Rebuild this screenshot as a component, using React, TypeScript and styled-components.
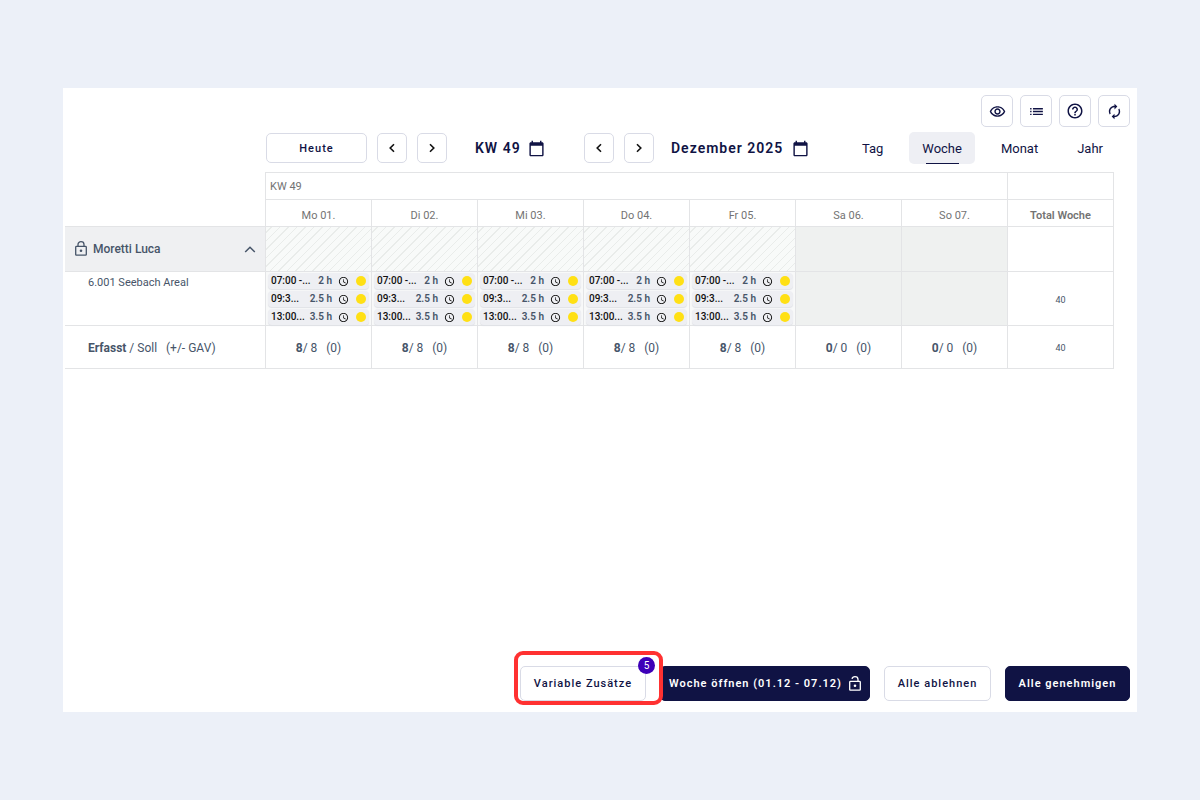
import React from 'react';
import styled, { createGlobalStyle, css } from 'styled-components';
import {
  MdAccessTime,
  MdAutorenew,
  MdCalendarToday,
  MdHelpOutline,
  MdList,
  MdOutlineRemoveRedEye,
} from 'react-icons/md';

const navy = '#101344';
const line = '#e3e4e6';

const GlobalStyle = createGlobalStyle`
  * { box-sizing: border-box; }
  body {
    margin: 0;
    background: #ecf0f8;
    font-family: Roboto, "Liberation Sans", sans-serif;
    color: ${navy};
  }
  button { font-family: inherit; color: inherit; cursor: pointer; }
`;

const Page = styled.div`
  min-height: 100vh;
  padding: 88px 63px;
  display: flex;
`;

const Card = styled.main`
  flex: 1;
  min-width: 0;
  background: #fff;
  display: flex;
  flex-direction: column;
`;

const IconBar = styled.div`
  display: flex;
  justify-content: flex-end;
  gap: 7px;
  padding: 7px 7px 0;
`;

const outlined = css`
  display: inline-flex;
  align-items: center;
  justify-content: center;
  padding: 0;
  background: #fff;
  border: 1px solid #d9dbe6;
  border-radius: 5px;
`;

const IconButton = styled.button`
  ${outlined}
  width: 32px;
  height: 32px;
`;

const Toolbar = styled.div`
  display: flex;
  align-items: center;
  height: 32px;
  margin: 5px 21px 8px 203px;
`;

const TodayButton = styled.button`
  ${outlined}
  width: 101px;
  height: 30px;
  font-size: 11px;
  font-weight: 500;
  letter-spacing: 1px;
`;

const Stepper = styled.div`
  display: flex;
  gap: 10px;
`;

const StepButton = styled.button`
  ${outlined}
  width: 30px;
  height: 30px;
  color: #111;
`;

const DateButton = styled.button<{ $width: number }>`
  display: flex;
  align-items: center;
  justify-content: space-between;
  width: ${(p) => p.$width}px;
  padding: 0;
  border: 0;
  background: none;
  font-size: 14px;
  font-weight: 600;
  letter-spacing: 1px;
  white-space: nowrap;
`;

const WeekGroup = styled.div`
  display: flex;
  align-items: center;
  gap: 28px;
  margin-left: 10px;
`;

const MonthGroup = styled.div`
  display: flex;
  align-items: center;
  gap: 17px;
  margin-left: 39px;
`;

const Tabs = styled.div`
  display: flex;
  gap: 13px;
  margin-left: auto;
`;

const Tab = styled.button<{ $active?: boolean }>`
  display: flex;
  align-items: center;
  justify-content: center;
  position: relative;
  height: 32px;
  padding: 0 13px;
  border: 0;
  border-radius: 5px;
  background: ${(p) => (p.$active ? '#eeeff4' : 'none')};
  font-size: 13px;
  ${(p) =>
    p.$active &&
    css`
      &::after {
        content: '';
        position: absolute;
        bottom: 0;
        left: 25%;
        right: 25%;
        height: 1px;
        background: ${navy};
      }
    `}
`;

const TableWrap = styled.div`
  padding: 0 23px 0 2px;
`;

const Plan = styled.table`
  table-layout: fixed;
  width: 100%;
  border-collapse: separate;
  border-spacing: 0;
  font-size: 12px;
  color: #475569;
`;

const NameCol = styled.col`
  width: 201px;
`;

const Blank = styled.td`
  padding: 0;
  border-right: 1px solid ${line};
  border-bottom: 1px solid ${line};
`;

const HeadCell = styled.th<{ $top?: boolean; $left?: boolean; $bold?: boolean }>`
  height: ${(p) => (p.$top ? 28 : 27)}px;
  padding: ${(p) => (p.$left ? '0 4px' : '4px 0 0')};
  text-align: ${(p) => (p.$left ? 'left' : 'center')};
  font-size: 11px;
  font-weight: ${(p) => (p.$bold ? 600 : 400)};
  color: #737373;
  border-right: 1px solid ${line};
  border-bottom: 1px solid ${line};
  border-top: ${(p) => (p.$top ? `1px solid ${line}` : '0')};
`;

const NameCell = styled.th`
  height: 45px;
  padding: 0 9px 0 10px;
  background: #eff0f2;
  border-right: 1px solid ${line};
  border-bottom: 1px solid ${line};
`;

const Person = styled.button`
  display: flex;
  align-items: center;
  gap: 6px;
  width: 100%;
  padding: 0;
  border: 0;
  background: none;
  font-size: 12px;
  font-weight: 500;

  svg:last-child { margin-left: auto; }
`;

const Cell = styled.td<{ $fill?: 'hatch' | 'off' | 'work' }>`
  padding: 0;
  text-align: center;
  vertical-align: middle;
  border-right: 1px solid ${line};
  border-bottom: 1px solid ${line};
  ${(p) => p.$fill === 'off' && 'background: #eff1f0;'}
  ${(p) => p.$fill === 'work' && 'background: #f8f9f9; vertical-align: top;'}
  ${(p) =>
    p.$fill === 'hatch' &&
    'background: repeating-linear-gradient(-45deg, #f8faf9 0 5px, #e9ecea 5px 6px);'}
`;

const SiteCell = styled.th`
  height: 54px;
  padding: 4px 0 0 23px;
  text-align: left;
  vertical-align: top;
  font-size: 11px;
  font-weight: 400;
  line-height: 14px;
  border-right: 1px solid ${line};
  border-bottom: 1px solid ${line};
`;

const SumCell = styled.th`
  height: 43px;
  padding: 2px 0 0 23px;
  text-align: left;
  font-size: 12px;
  font-weight: 400;
  white-space: pre;
  border-right: 1px solid ${line};
  border-bottom: 1px solid ${line};
`;

const Sum = styled.span`
  display: block;
  padding-top: 2px;
  white-space: pre;
  font-size: 12px;
`;

const Total = styled.span`
  font-size: 9px;
`;

const Shifts = styled.ul`
  list-style: none;
  margin: 0;
  padding: 1px 2px 0;
  display: grid;
  gap: 2px;
`;

const Shift = styled.li`
  display: flex;
  align-items: center;
  height: 16px;
  padding: 0 3px;
  border-radius: 4px;
  background: #eeeff3;
  box-shadow: 0 1px 1px #dfe1e6;
  font-size: 10px;
  font-weight: 500;
  line-height: 16px;
  white-space: nowrap;
  color: #111;
`;

const Hours = styled.span`
  margin-left: auto;
  margin-right: 6px;
  font-weight: 600;
  color: #475569;
`;

const Dot = styled.span`
  width: 10px;
  height: 10px;
  margin-left: 7px;
  border-radius: 50%;
  background: #ffe014;
`;

const Footer = styled.footer`
  display: flex;
  justify-content: flex-end;
  gap: 14px;
  margin-top: auto;
  padding: 24px 7px 11px;
`;

const Action = styled.button<{ $solid?: boolean; $width: number }>`
  display: inline-flex;
  align-items: center;
  justify-content: center;
  gap: 7px;
  min-width: ${(p) => p.$width}px;
  height: 35px;
  padding: 0 8px;
  border: 1px solid ${(p) => (p.$solid ? navy : '#d9dbe6')};
  border-radius: 5px;
  background: ${(p) => (p.$solid ? navy : '#fff')};
  color: ${(p) => (p.$solid ? '#fff' : navy)};
  font-size: 11px;
  font-weight: ${(p) => (p.$solid ? 600 : 500)};
  letter-spacing: 1px;
  white-space: nowrap;
`;

const Highlighted = styled.div`
  position: relative;
  display: flex;

  &::after {
    content: '';
    position: absolute;
    z-index: 1;
    inset: -15px -17px -4px -6px;
    border: 4px solid #ff3131;
    border-radius: 9px;
    pointer-events: none;
  }
`;

const Badge = styled.span`
  position: absolute;
  top: -9px;
  right: -9px;
  width: 17px;
  height: 17px;
  border-radius: 50%;
  background: #3d00b8;
  color: #fff;
  font-size: 10px;
  line-height: 17px;
  text-align: center;
`;

const Lock = ({ open }: { open?: boolean }) => (
  <svg width="12" height="16" viewBox="0 0 12 16" fill="none" stroke="currentColor" strokeWidth="1.3" aria-hidden>
    <rect x="0.7" y="5.4" width="10.6" height="8.8" rx="0.8" />
    <path d={open ? 'M3 2.8C3.3 1.5 4.4 0.7 6 0.7S9 1.8 9 3.5V5.4' : 'M3 5.4V3.5C3 1.8 4.3 0.7 6 0.7S9 1.8 9 3.5V5.4'} />
    <circle cx="6" cy="9.8" r="1.3" fill="currentColor" stroke="none" />
  </svg>
);

const Chevron = ({ dir }: { dir: 'left' | 'right' }) => (
  <svg width="6" height="10" viewBox="0 0 6 10" fill="none" stroke="currentColor" strokeWidth="1.6" aria-hidden>
    <path d={dir === 'left' ? 'M5 1.2L1.2 5L5 8.8' : 'M1 1.2L4.8 5L1 8.8'} />
  </svg>
);

const ChevronUp = () => (
  <svg width="12" height="8" viewBox="0 0 12 8" fill="none" stroke="currentColor" strokeWidth="1.5" aria-hidden>
    <path d="M1.2 7L6 2.2L10.8 7" />
  </svg>
);

const days = ['Mo 01.', 'Di 02.', 'Mi 03.', 'Do 04.', 'Fr 05.', 'Sa 06.', 'So 07.'];
const shifts = [
  { time: '07:00 -...', hours: '2 h' },
  { time: '09:3...', hours: '2.5 h' },
  { time: '13:00...', hours: '3.5 h' },
];
const isWorkday = (i: number) => i < 5;

export default function App() {
  return (
    <>
      <GlobalStyle />
      <Page>
        <Card>
          <IconBar>
            <IconButton aria-label="Ansicht"><MdOutlineRemoveRedEye size={17} /></IconButton>
            <IconButton aria-label="Liste"><MdList size={17} /></IconButton>
            <IconButton aria-label="Hilfe"><MdHelpOutline size={18} /></IconButton>
            <IconButton aria-label="Aktualisieren"><MdAutorenew size={17} /></IconButton>
          </IconBar>

          <Toolbar>
            <TodayButton>Heute</TodayButton>
            <WeekGroup>
              <Stepper>
                <StepButton aria-label="Vorherige Woche"><Chevron dir="left" /></StepButton>
                <StepButton aria-label="Nächste Woche"><Chevron dir="right" /></StepButton>
              </Stepper>
              <DateButton $width={70}>KW 49<MdCalendarToday size={17} /></DateButton>
            </WeekGroup>
            <MonthGroup>
              <Stepper>
                <StepButton aria-label="Vorheriger Monat"><Chevron dir="left" /></StepButton>
                <StepButton aria-label="Nächster Monat"><Chevron dir="right" /></StepButton>
              </Stepper>
              <DateButton $width={138}>Dezember 2025<MdCalendarToday size={17} /></DateButton>
            </MonthGroup>
            <Tabs>
              <Tab>Tag</Tab>
              <Tab $active>Woche</Tab>
              <Tab>Monat</Tab>
              <Tab>Jahr</Tab>
            </Tabs>
          </Toolbar>

          <TableWrap>
            <Plan>
              <colgroup>
                <NameCol />
                {days.map((d) => <col key={d} />)}
                <col />
              </colgroup>
              <thead>
                <tr>
                  <Blank rowSpan={2} />
                  <HeadCell $top $left colSpan={7}>KW 49</HeadCell>
                  <HeadCell $top />
                </tr>
                <tr>
                  {days.map((d) => <HeadCell key={d} scope="col">{d}</HeadCell>)}
                  <HeadCell $bold scope="col">Total Woche</HeadCell>
                </tr>
              </thead>
              <tbody>
                <tr>
                  <NameCell scope="row">
                    <Person><Lock />Moretti Luca<ChevronUp /></Person>
                  </NameCell>
                  {days.map((d, i) => <Cell key={d} $fill={isWorkday(i) ? 'hatch' : 'off'} />)}
                  <Cell />
                </tr>
                <tr>
                  <SiteCell scope="row">6.001 Seebach Areal</SiteCell>
                  {days.map((d, i) => (
                    <Cell key={d} $fill={isWorkday(i) ? 'work' : 'off'}>
                      {isWorkday(i) && (
                        <Shifts>
                          {shifts.map((s) => (
                            <Shift key={s.time}>
                              <span>{s.time}</span>
                              <Hours>{s.hours}</Hours>
                              <MdAccessTime size={11} />
                              <Dot />
                            </Shift>
                          ))}
                        </Shifts>
                      )}
                    </Cell>
                  ))}
                  <Cell><Total>40</Total></Cell>
                </tr>
                <tr>
                  <SumCell scope="row"><b>Erfasst</b>{' / Soll   (+/- GAV)'}</SumCell>
                  {days.map((d, i) => {
                    const h = isWorkday(i) ? 8 : 0;
                    return <Cell key={d}><Sum><b>{h}</b>{`/ ${h}   (0)`}</Sum></Cell>;
                  })}
                  <Cell><Total>40</Total></Cell>
                </tr>
              </tbody>
            </Plan>
          </TableWrap>

          <Footer>
            <Highlighted>
              <Action $width={126}>Variable Zusätze</Action>
              <Badge>5</Badge>
            </Highlighted>
            <Action $solid $width={210}>Woche öffnen (01.12 - 07.12)<Lock open /></Action>
            <Action $width={107}>Alle ablehnen</Action>
            <Action $solid $width={125}>Alle genehmigen</Action>
          </Footer>
        </Card>
      </Page>
    </>
  );
}
